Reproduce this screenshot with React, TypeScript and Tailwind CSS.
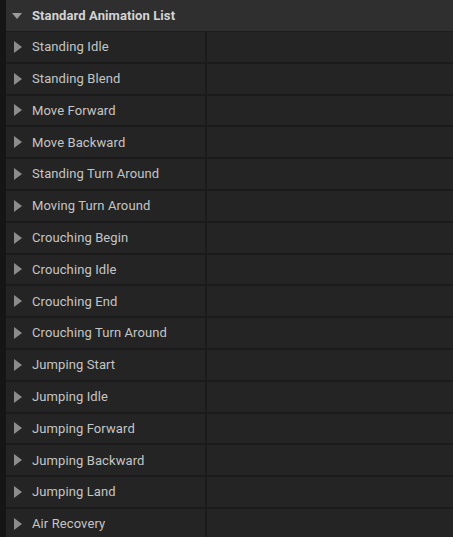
const items = [
  "Standing Idle",
  "Standing Blend",
  "Move Forward",
  "Move Backward",
  "Standing Turn Around",
  "Moving Turn Around",
  "Crouching Begin",
  "Crouching Idle",
  "Crouching End",
  "Crouching Turn Around",
  "Jumping Start",
  "Jumping Idle",
  "Jumping Forward",
  "Jumping Backward",
  "Jumping Land",
  "Air Recovery",
];

export default function App() {
  return (
    <div
      className="flex h-[537px] w-[453px] overflow-hidden bg-[#151515]"
      style={{ fontFamily: "Roboto, 'Noto Sans', sans-serif" }}
    >
      <div className="w-[6px] shrink-0 bg-[#151515]" />
      <div className="flex flex-1 flex-col">
        {/* header */}
        <div className="flex h-[32px] shrink-0 items-center bg-[#2f2f2f] border-b border-[#1c1c1c]">
          <svg className="ml-[6px] h-[8px] w-[10px]" viewBox="0 0 10 8">
            <path d="M0 1 L10 1 L5 7 Z" fill="#9b9b9b" />
          </svg>
          <span className="ml-[10px] text-[13px] font-bold tracking-[0.1px] text-[#d4d4d4]">
            Standard Animation List
          </span>
        </div>
        {items.map((name) => (
          <div
            key={name}
            className="flex h-[31.8px] shrink-0 border-b-2 border-[#1b1b1b]"
          >
            <div className="flex w-[199px] items-center bg-[#242424]">
              <svg className="ml-[8px] h-[12px] w-[8px]" viewBox="0 0 8 12">
                <path d="M0 0 L8 6 L0 12 Z" fill="#8c8c8c" />
              </svg>
              <span className="ml-[10px] text-[13px] tracking-[0.1px] text-[#c4c4c4]">{name}</span>
            </div>
            <div className="w-[2px] bg-[#1b1b1b]" />
            <div className="flex-1 bg-[#242424]" />
          </div>
        ))}
      </div>
    </div>
  );
}
